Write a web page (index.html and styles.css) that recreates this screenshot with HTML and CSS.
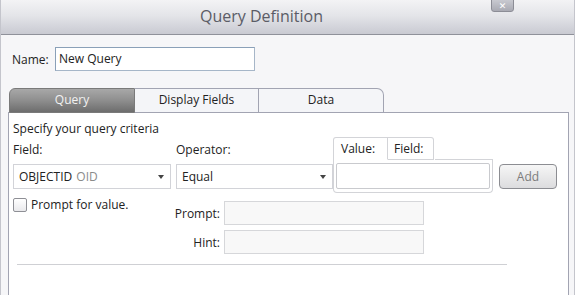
FILE: index.html
```html
<!DOCTYPE html>
<html>
<head>
<meta charset="utf-8">
<link rel="stylesheet" href="styles.css">
</head>
<body>
<div class="window">
  <div class="titlebar">
    <span class="title">Query Definition</span>
    <span class="close">&#x2715;</span>
  </div>
  <div class="content">
    <div class="name-row">
      <label class="name-label">Name:</label>
      <div class="name-input">New Query</div>
    </div>
    <div class="tabs">
      <div class="tab tab-active tab-first">Query</div>
      <div class="tab">Display Fields</div>
      <div class="tab tab-last">Data</div>
    </div>
    <div class="panel">
      <div class="intro">Specify your query criteria</div>
      <div class="criteria">
        <div class="col col-field">
          <div class="lbl">Field:</div>
          <div class="select"><span class="sel-text">OBJECTID <span class="muted">OID</span></span><span class="arrow"></span></div>
        </div>
        <div class="col col-op">
          <div class="lbl">Operator:</div>
          <div class="select"><span class="sel-text">Equal</span><span class="arrow"></span></div>
        </div>
        <div class="valbox">
          <div class="vtabs">
            <div class="vtab vtab-active">Value:</div>
            <div class="vtab">Field:</div>
          </div>
          <div class="vbody">
            <div class="vinput"></div>
          </div>
        </div>
        <div class="btn">Add</div>
      </div>
      <div class="prompt-row">
        <div class="check-col">
          <span class="checkbox"></span>
          <span class="check-text">Prompt for value.</span>
        </div>
        <div class="pgrid">
          <span class="plabel">Prompt:</span><div class="pinput"></div>
          <span class="plabel">Hint:</span><div class="pinput"></div>
        </div>
      </div>
      <div class="sep"></div>
    </div>
  </div>
</div>
</body>
</html>
```
FILE: styles.css
```css
* { box-sizing: border-box; }
html, body { margin: 0; padding: 0; }
body {
  width: 575px;
  height: 295px;
  overflow: hidden;
  background: #f6f6f8;
  font-family: "Open Sans", "DejaVu Sans", sans-serif;
  font-size: 12px;
  color: #222;
}
.window {
  width: 575px;
  height: 295px;
  border-left: 1px solid #c4c5cc;
  border-right: 1px solid #c4c5cc;
  background: #f6f6f8;
}
.titlebar {
  height: 35px;
  background: linear-gradient(#f3f3f5 0%, #e4e5e9 45%, #c9cad2 100%);
  border-bottom: 1px solid #8f919a;
  display: flex;
  justify-content: center;
  align-items: center;
  position: relative;
}
.title {
  font-size: 16px;
  color: #5b5c66;
  margin-left: -52px;
  margin-top: -3px;
}
.close {
  position: absolute;
  left: 490px;
  top: -1px;
  width: 23px;
  height: 13px;
  border: 1px solid #8c8d96;
  border-radius: 0 0 3px 3px;
  background: linear-gradient(#c8c9d0, #a9aab3);
  color: #fff;
  font-size: 9px;
  font-weight: bold;
  line-height: 11px;
  text-align: center;
}
.content {
  padding: 12px 0 0 7px;
}
.name-row {
  display: flex;
  align-items: center;
  height: 24px;
}
.name-label {
  width: 47px;
  padding-left: 4px;
}
.name-input {
  width: 200px;
  height: 24px;
  border: 1px solid #8aa0b8;
  border-color: #8aa0b8 #a6b6c8 #a6b6c8 #8aa0b8;
  background: #fff;
  padding: 4px 3px;
  line-height: 14px;
}
.tabs {
  display: flex;
  margin-top: 17px;
  margin-left: 1px;
  height: 25px;
}
.tab {
  width: 124px;
  height: 25px;
  border: 1px solid #a2a4b2;
  border-left: none;
  border-bottom: 1px solid #a2a4b2;
  background: #f4f5f8;
  text-align: center;
  line-height: 22px;
  color: #222;
}
.tab-first {
  border-left: 1px solid #8a8a8a;
  border-radius: 6px 0 0 0;
  width: 126px;
}
.tab-last {
  border-radius: 0 7px 0 0;
  width: 125px;
}
.tab-active {
  background: linear-gradient(#a8a8a8 0%, #8e8e8e 50%, #6d6d6d 100%);
  border-color: #7a7a7a;
  color: #f2f2f2;
}
.panel {
  width: 561px;
  height: 190px;
  margin-top: -1px;
  border: 1px solid #a2a4b2;
  border-bottom: none;
  background: #fff;
  padding: 8px 0 0 4px;
}
.intro {
  line-height: 16px;
  height: 16px;
}
.criteria {
  display: flex;
  align-items: flex-end;
}
.col {
  display: flex;
  flex-direction: column;
  width: 158px;
}
.col-op {
  margin-left: 5px;
  width: 157px;
}
.lbl {
  line-height: 16px;
  margin-bottom: 6px;
}
.select {
  height: 25px;
  border: 1px solid #d2d3d8;
  background: #fff;
  display: flex;
  align-items: center;
  justify-content: space-between;
  padding: 0 6px 0 5px;
}
.sel-text { line-height: 14px; }
.muted { color: #8b8b8b; margin-left: 1px; }
.arrow {
  width: 0;
  height: 0;
  border-left: 3.5px solid transparent;
  border-right: 3.5px solid transparent;
  border-top: 4px solid #444;
}
.valbox {
  width: 160px;
  margin-left: 0px;
  margin-bottom: -4px;
  display: flex;
  flex-direction: column;
}
.vtabs {
  display: flex;
  height: 23px;
}
.vtab {
  width: 55px;
  height: 23px;
  border: 1px solid #d3d4d8;
  border-left: none;
  background: #fff;
  line-height: 21px;
  padding-left: 7px;
  border-radius: 0 3px 0 0;
}
.vtab:last-child { width: 46px; padding-left: 6px; }
.vtab-active {
  border-left: 1px solid #d3d4d8;
  border-bottom-color: #fff;
  border-radius: 3px 0 0 0;
}
.vbody {
  border: 1px solid #d3d4d8;
  border-top: none;
  border-radius: 0 0 4px 4px;
  padding: 4px 2px 3px 2px;
  margin-top: -1px;
  position: relative;
}
.vbody::before {
  content: "";
  position: absolute;
  top: 0;
  left: 101px;
  right: -1px;
  border-top: 1px solid #d3d4d8;
}
.vinput {
  height: 26px;
  border: 1px solid #c9cace;
  border-radius: 2px;
  background: #fff;
}
.btn {
  width: 58px;
  height: 25px;
  margin-left: 6px;
  border: 1px solid #8c8d92;
  border-radius: 4px;
  background: linear-gradient(#f6f6f6, #dcdcde);
  color: #7c7c7c;
  font-size: 12px;
  text-align: center;
  line-height: 23px;
}
.prompt-row {
  display: flex;
  margin-top: 9px;
}
.check-col {
  width: 161px;
  display: flex;
  align-items: flex-start;
}
.checkbox {
  width: 14px;
  height: 14px;
  border: 1px solid #8e8f95;
  border-radius: 2px;
  background: linear-gradient(#ffffff, #e9e9ec);
  margin-right: 4px;
}
.check-text {
  line-height: 14px;
  margin-top: 0px;
}
.pgrid {
  display: grid;
  grid-template-columns: 50px 200px;
  row-gap: 5px;
  align-items: center;
  margin-top: 3px;
}
.plabel {
  text-align: right;
  padding-right: 4px;
}
.pinput {
  height: 24px;
  border: 1px solid #d6d7da;
  background: #f8f8f8;
}
.sep {
  margin-top: 10px;
  margin-left: 4px;
  width: 490px;
  border-top: 1px solid #cfd0d4;
}
```
